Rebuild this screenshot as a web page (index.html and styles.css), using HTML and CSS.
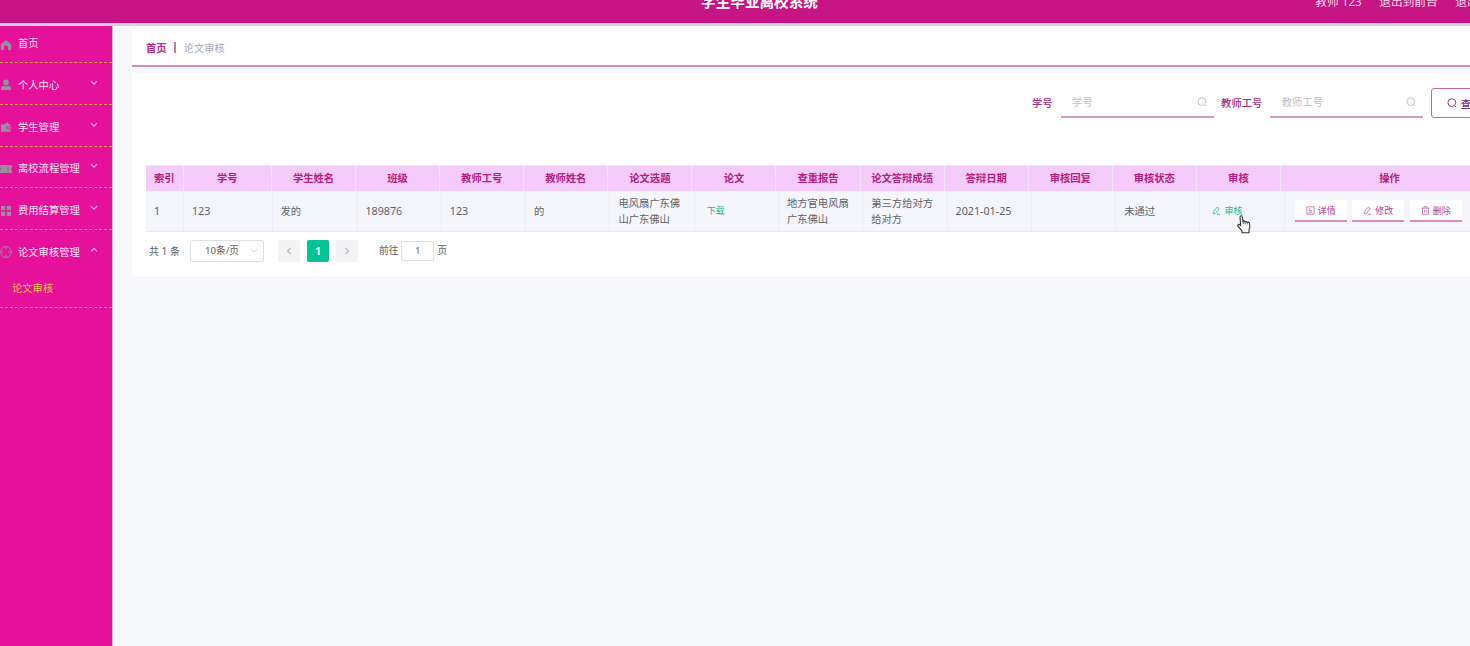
FILE: index.html
```html
<!DOCTYPE html>
<html lang="zh-CN">
<head>
    <meta charset="UTF-8">
    <meta name="viewport" content="width=device-width, initial-scale=1.0">
    <title>学生毕业离校系统</title>
    <link rel="stylesheet" href="styles.css">
</head>
<body>

    <header class="header">
        <div class="header-title">学生毕业离校系统</div>
        <div class="header-user">
            <span class="user-name">教师 123</span>
            <span>退出到前台</span>
            <span>退出登录</span>
        </div>
    </header>

    <div class="layout">
        <nav class="sidebar">
            <div class="menu-item menu-home">
                <svg class="menu-icon" viewBox="0 0 12 12"><path d="M6 1 L11.2 5.4 V11 H8 V8 Q8 6.6 6 6.6 Q4 6.6 4 8 V11 H.8 V5.4 Z" fill="currentColor"/></svg>
                <span>首页</span>
            </div>
            <div class="menu-item">
                <svg class="menu-icon" viewBox="0 0 12 12"><circle cx="6" cy="3.4" r="2.9" fill="currentColor"/><path d="M1 11 V9.3 Q1 7.1 3.5 7.1 H8.5 Q11 7.1 11 9.3 V11 Z" fill="currentColor"/></svg>
                <span>个人中心</span>
                <svg class="menu-arrow" viewBox="0 0 8 6"><path d="M1 1.2 L4 4.2 L7 1.2"/></svg>
            </div>
            <div class="menu-item">
                <svg class="menu-icon" viewBox="0 0 12 12"><path d="M1 3.6 H4 L7.6 1 L9.2 3.6 H10.6 V5.6 H7.4 Q6.4 5.6 6.4 6.9 Q6.4 8.2 7.4 8.2 H10.6 V10.8 H1 Z M7.4 6.3 H11.4 V7.6 H7.4 Z" fill="currentColor"/></svg>
                <span>学生管理</span>
                <svg class="menu-arrow" viewBox="0 0 8 6"><path d="M1 1.2 L4 4.2 L7 1.2"/></svg>
            </div>
            <div class="menu-item">
                <svg class="menu-icon" viewBox="0 0 12 12"><path d="M0 2 H7.4 L8 2.8 L8.6 2 H12 V4.6 Q10.2 6 12 7.4 V10 H8.6 L8 9.2 L7.4 10 H0 V7.4 Q1.8 6 0 4.6 Z M7.6 4.2 V5.4 H8.4 V4.2 Z M7.6 6.6 V7.8 H8.4 V6.6 Z" fill="currentColor" fill-rule="evenodd"/></svg>
                <span>离校流程管理</span>
                <svg class="menu-arrow" viewBox="0 0 8 6"><path d="M1 1.2 L4 4.2 L7 1.2"/></svg>
            </div>
            <div class="menu-item">
                <svg class="menu-icon" viewBox="0 0 12 12"><path d="M1 1 H5.2 V5.2 H1 Z M6.8 1 H11 V5.2 H6.8 Z M1 6.8 H5.2 V11 H1 Z M6.8 6.8 H11 V11 H6.8 Z" fill="currentColor"/></svg>
                <span>费用结算管理</span>
                <svg class="menu-arrow" viewBox="0 0 8 6"><path d="M1 1.2 L4 4.2 L7 1.2"/></svg>
            </div>
            <div class="menu-group">
                <div class="menu-item">
                    <svg class="menu-icon" viewBox="0 0 12 12"><g fill="none" stroke="currentColor" stroke-width=".9"><circle cx="6" cy="6" r="5.4"/><path d="M6 .6 V3.6 M6 8.4 V11.4 M.6 6 H3.6 M8.4 6 H11.4"/></g></svg>
                    <span>论文审核管理</span>
                    <svg class="menu-arrow" viewBox="0 0 8 6"><path d="M1 4.4 L4 1.4 L7 4.4"/></svg>
                </div>
                <div class="submenu-item">论文审核</div>
            </div>
        </nav>

        <main class="main">
            <div class="breadcrumb">
                <b>首页</b><i class="divider"></i><span>论文审核</span>
            </div>

            <section class="panel">
                <div class="search-form">
                    <label>学号</label>
                    <div class="search-input">
                        <span>学号</span>
                        <svg class="icon-search" viewBox="0 0 10 10"><circle cx="4.8" cy="4.6" r="3.9"/><path d="M7.5 7.5 L9.2 9.2"/></svg>
                    </div>
                    <label>教师工号</label>
                    <div class="search-input">
                        <span>教师工号</span>
                        <svg class="icon-search" viewBox="0 0 10 10"><circle cx="4.8" cy="4.6" r="3.9"/><path d="M7.5 7.5 L9.2 9.2"/></svg>
                    </div>
                    <button class="search-btn">
                        <svg class="icon-search" viewBox="0 0 10 10"><circle cx="4.8" cy="4.6" r="3.9"/><path d="M7.5 7.5 L9.2 9.2"/></svg>查询
                    </button>
                </div>

                <div class="table">
                    <div class="table-head">
                        <div>索引</div>
                        <div>学号</div>
                        <div>学生姓名</div>
                        <div>班级</div>
                        <div>教师工号</div>
                        <div>教师姓名</div>
                        <div>论文选题</div>
                        <div>论文</div>
                        <div>查重报告</div>
                        <div>论文答辩成绩</div>
                        <div>答辩日期</div>
                        <div>审核回复</div>
                        <div>审核状态</div>
                        <div>审核</div>
                        <div>操作</div>
                    </div>
                    <div class="table-row">
                        <div class="num">1</div>
                        <div class="num">123</div>
                        <div>发的</div>
                        <div class="num">189876</div>
                        <div class="num">123</div>
                        <div>的</div>
                        <div>电风扇广东佛山广东佛山</div>
                        <div><a class="link-btn">下载</a></div>
                        <div>地方官电风扇广东佛山</div>
                        <div>第三方给对方给对方</div>
                        <div class="num">2021-01-25</div>
                        <div></div>
                        <div>未通过</div>
                        <div class="audit-cell">
                            <a class="link-btn"><svg viewBox="0 0 10 10"><path d="M1.6 6.4 L5.8 1.2 L8 3 L3.8 8.2 L1.3 8.8 Z M5.6 9.2 H8.8"/></svg>审核</a>
                            <svg class="cursor" viewBox="0 0 14 19"><path d="M3.6 10.5 L3 2 Q3.2 .7 4.2 .8 Q5.2 .9 5.4 2 L6 6.2 Q7.2 5.5 8 6.7 Q9.4 6 10.2 7.3 Q11.8 6.8 12.5 8.3 Q13.4 11.8 12 14.5 V17.8 H5 V16 L1 11.2 Q.5 9.6 1.8 9.4 Z" fill="#fff" stroke="#333" stroke-width="1.1"/><path d="M6 6.2 L6.4 9 M8 6.7 L8.4 9.2 M10.2 7.3 L10.4 9.4" fill="none" stroke="#333" stroke-width=".8"/></svg>
                        </div>
                        <div class="actions">
                            <button><svg viewBox="0 0 10 10"><path d="M1 .9 H9 V9.1 H1 Z M3 3.4 H5 M3 5.2 H7 M3 7 H7"/></svg>详情</button>
                            <button><svg viewBox="0 0 10 10"><path d="M1.6 6.4 L5.8 1.2 L8 3 L3.8 8.2 L1.3 8.8 Z M5.6 9.2 H8.8"/></svg>修改</button>
                            <button><svg viewBox="0 0 10 10"><path d="M.6 2.4 H9.4 M3.4 2.2 V.8 H6.6 V2.2 M1.7 2.4 V9.2 H8.3 V2.4 M4 4.4 V7.2 M6 4.4 V7.2"/></svg>删除</button>
                        </div>
                    </div>
                </div>

                <div class="pagination">
                    <span class="total">共 1 条</span>
                    <div class="page-size">10条/页<svg viewBox="0 0 8 6"><path d="M1 1.2 L4 4.2 L7 1.2"/></svg></div>
                    <div class="pager">
                        <button><svg viewBox="0 0 6 8"><path d="M4.5 1 L1.5 4 L4.5 7"/></svg></button>
                        <button class="active">1</button>
                        <button><svg viewBox="0 0 6 8"><path d="M1.5 1 L4.5 4 L1.5 7"/></svg></button>
                    </div>
                    <span class="jump">前往<span class="jump-input">1</span>页</span>
                </div>
            </section>
        </main>
    </div>

</body>
</html>
```
FILE: styles.css
```css
* { box-sizing: border-box; }
body {
    margin: 0;
    height: 646px;
    overflow: hidden;
    display: flex;
    flex-direction: column;
    background: #f6f8fc;
    font-family: "Noto Sans", "Noto Sans CJK SC", sans-serif;
    font-size: 10.3px;
    line-height: 16px;
    color: #606266;
}
button { font-family: inherit; padding: 0; border: none; }
svg { flex: none; }

/* header */
.header {
    flex: none;
    width: 1519px;
    height: 46px;
    margin-top: -20px;
    padding: 0 16px 1px 0;
    display: grid;
    grid-template-columns: 1fr auto 1fr;
    align-items: center;
    background: #c71585;
    border-bottom: 3px solid #d5d3d8;
    color: #fff;
}
.header-title {
    grid-column: 2;
    font-size: 14.6px;
    font-weight: bold;
    margin-right: -16px;
}
.header-user {
    display: flex;
    justify-content: flex-end;
    gap: 17.5px;
    padding-right: 1px;
    font-size: 11.7px;
    color: #f7d3e9;
}

.layout { flex: 1; display: flex; width: 1519px; }

/* sidebar */
.sidebar {
    flex: none;
    width: 113px;
    background: #e6119a;
    border-right: 1px solid #f0a6d6;
    color: #fde3f4;
}
.menu-item {
    height: 41.75px;
    padding: 3px 14px 0 0;
    display: flex;
    align-items: center;
    border-bottom: 1px dashed #e09a50;
}
.menu-home { height: 37px; padding-top: 0; padding-bottom: 2px; }
.menu-icon { width: 12px; height: 12px; margin: 1px 6px 0 0; color: #9a8f9c; }
.menu-home .menu-icon { margin-top: 3px; }
.menu-arrow {
    width: 8px;
    height: 6px;
    margin: -4px 0 0 auto;
    fill: none;
    stroke: #f5b9e0;
    stroke-width: 1.1;
}
.menu-group { border-bottom: 1px dashed #e09a50; }
.menu-group .menu-item { border-bottom: none; padding-top: 2px; }
.submenu-item { height: 35px; padding: 8px 0 0 12px; color: #f6c04c; }

/* content */
.main { flex: 1; padding: 4px 0 0 19px; }
.breadcrumb {
    height: 37px;
    padding: 0 14px;
    display: flex;
    align-items: center;
    background: #fff;
    border-bottom: 2px solid #d390be;
    color: #a3abc2;
}
.breadcrumb b { color: #b82a86; }
.divider { width: 2px; height: 11px; margin: 0 8px 0 7px; background: #d273ab; }
.panel {
    height: 203px;
    margin-top: 6px;
    padding: 15px 0 0 14px;
    background: #fefefe;
}

.search-form { display: flex; align-items: center; height: 30px; padding-left: 886px; }
.search-form label { color: #a92d80; font-weight: 500; }
.search-input {
    width: 153px;
    height: 30px;
    margin: 0 7.5px 0 8px;
    padding: 0 7px 0 11.5px;
    display: flex;
    align-items: center;
    justify-content: space-between;
    border-bottom: 2px solid #d49ac3;
    color: #bfc1ca;
}
.icon-search { width: 10px; height: 10px; fill: none; stroke: currentColor; stroke-width: .9; }
.search-btn {
    width: 77px;
    height: 30px;
    padding-left: 15px;
    display: flex;
    align-items: center;
    gap: 4px;
    background: #fff;
    border: 1px solid #c56aa8;
    border-radius: 3px;
    color: #7b2a76;
    font-size: 10.3px;
    font-weight: 500;
}

/* table */
.table { margin-top: 47px; width: 1353px; }
.table-head {
    display: grid;
    grid-template-columns: 37.5px 88.5px repeat(12, 84.08px) 1fr;
    height: 26px;
    border-top: 1px solid #eee6f6;
    background: #f5cbfb;
    color: #b8207f;
    font-weight: bold;
    text-align: center;
    line-height: 25px;
}
.table-head div { border-right: 1px solid #f0e4fa; white-space: nowrap; }
.table-row {
    display: grid;
    grid-template-columns: 38px 88.5px 85px repeat(11, 84.3px) 1fr;
    height: 41px;
    background: #f5f6fc;
    border-bottom: 1px solid #e8eaf3;
}
.table-row > div {
    display: flex;
    align-items: center;
    padding: 0 6px 0 8px;
    border-right: 1px solid #ebedf5;
}
.table-row .num { font-size: 10.7px; }
.link-btn {
    display: flex;
    align-items: center;
    gap: 3px;
    padding: 0 0 1px 4px;
    font-size: 9px;
    color: #28b592;
}
.link-btn svg, .actions svg { width: 9px; height: 9px; fill: none; stroke: currentColor; stroke-width: .9; }
.actions svg { opacity: .8; }
.audit-cell { position: relative; }
.cursor { position: absolute; left: 37px; top: 24px; width: 14px; height: 19px; }
.table-row .actions { gap: 5.5px; padding-left: 10px; }
.actions button {
    width: 52px;
    height: 22px;
    display: flex;
    align-items: center;
    justify-content: center;
    gap: 3px;
    background: #fff;
    border-bottom: 2px solid #d88fbf;
    color: #b04390;
    font-size: 9px;
}

/* pagination */
.pagination { display: flex; align-items: center; height: 22px; margin-top: 8px; padding-left: 3px; font-size: 9.7px; }
.total { width: 41px; font-size: 10px; }
.page-size {
    width: 74px;
    height: 22px;
    padding: 0 5px 0 14px;
    display: flex;
    align-items: center;
    justify-content: space-between;
    background: #fff;
    border: 1px solid #dfe1e8;
    border-radius: 2px;
}
.page-size svg { width: 8px; height: 6px; fill: none; stroke: #c0c4cc; stroke-width: .9; }
.pager { display: flex; gap: 7px; margin: 0 21px 0 14px; }
.pager button {
    width: 22px;
    height: 22px;
    display: flex;
    align-items: center;
    justify-content: center;
    border-radius: 2px;
    background: #f4f4f6;
    font-size: 10px;
    font-weight: bold;
}
.pager svg { width: 6px; height: 8px; fill: none; stroke: #b4b6bd; stroke-width: 1.1; }
.pager .active { background: #06c294; color: #fff; }
.jump { display: flex; align-items: center; }
.jump-input {
    width: 33px;
    height: 20px;
    margin: 0 3px;
    line-height: 18px;
    text-align: center;
    background: #fff;
    border: 1px solid #dfe1e8;
    border-radius: 2px;
}
```
